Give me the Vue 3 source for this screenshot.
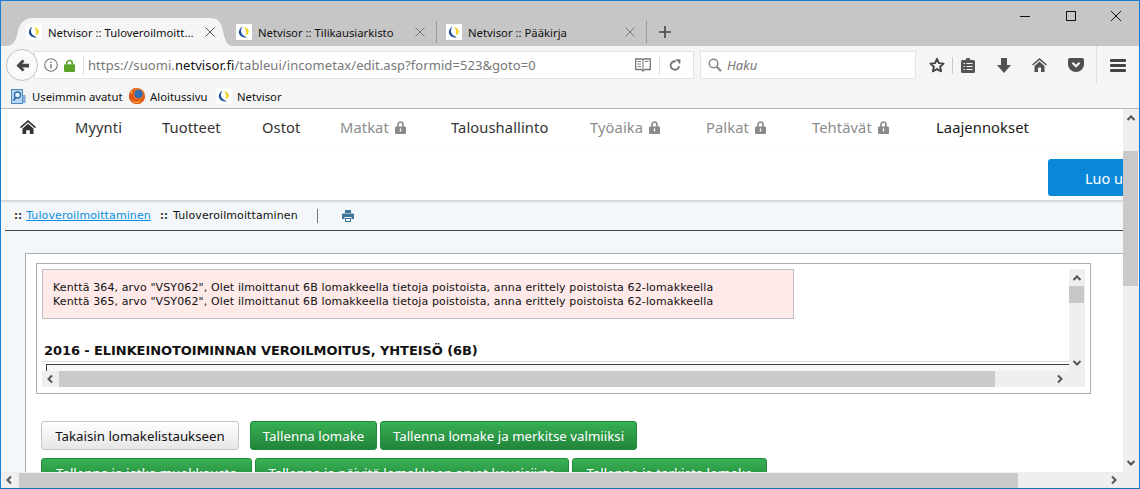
<script setup>
const nav = [
  { t: 'Myynti', w: 87 },
  { t: 'Tuotteet', w: 100 },
  { t: 'Ostot', w: 78 },
  { t: 'Matkat', w: 111, lock: true },
  { t: 'Taloushallinto', w: 139 },
  { t: 'Työaika', w: 116, lock: true },
  { t: 'Palkat', w: 106, lock: true },
  { t: 'Tehtävät', w: 124, lock: true },
  { t: 'Laajennokset', w: 110, dark: true },
]
const tabs = [
  { t: 'Netvisor :: Tuloveroilmoitt...', active: true },
  { t: 'Netvisor :: Tilikausiarkisto' },
  { t: 'Netvisor :: Pääkirja' },
]
const favBlue = 'M6.5 2.500C3.500 4.500 2 7.500 3.500 10.500 5 13 8 14 11 13.200 8.500 12.500 6 11 5.200 8.500 4.600 6.500 5.200 4.300 6.500 2.500z'
const favYellow = 'M8 3c2.800.6 5 2.500 4.800 5-.2 1.500-1.800 3-3.800 3.500 1-1.300 1.500-2.700 1.200-4.200C9.900 5.800 9 4.200 8 3z'
</script>

<template>
  <div class="win">
    <div class="tabbar">
      <div v-for="tab in tabs" :key="tab.t" class="tab" :class="{ active: tab.active }">
        <svg v-if="tab.active" class="tabshape" viewBox="0 0 228 28"><path d="M0 28c9 0 11-6 13-15C15 4 20 0 28 0H205c8 0 11 4 13 13 2 9 4 15 10 15z" fill="#f5f5f5"/></svg>
        <svg class="fav" viewBox="0 0 16 16"><rect width="16" height="16" fill="#fff"/><path :d="favBlue" fill="#1f4f9c"/><path :d="favYellow" fill="#f3cf1d"/></svg>
        <span class="tab-t">{{ tab.t }}</span>
        <svg class="x" viewBox="0 0 10 10"><path d="M.5.5l9 9M9.500.5l-9 9" :stroke="tab.active ? '#555' : '#777'" fill="none"/></svg>
      </div>
      <svg class="plus" viewBox="0 0 12 12"><path d="M6 0v12M0 6h12" stroke="#444" stroke-width="1.600" fill="none"/></svg>
      <div class="winbtns">
        <svg viewBox="0 0 10 10" class="wb"><path d="M0 5.500h10" stroke="#111" fill="none"/></svg>
        <svg viewBox="0 0 10 10" class="wb mx"><rect x=".5" y=".5" width="9" height="9" stroke="#111" fill="none"/></svg>
        <svg viewBox="0 0 10 10" class="wb cl"><path d="M0 0l10 10M10 0L0 10" stroke="#111" fill="none"/></svg>
      </div>
    </div>

    <div class="toolbar">
      <div class="back">
        <svg viewBox="0 0 16 16" width="15" height="15"><path d="M8 1.500L1.500 8 8 14.500l2.200-2L7.800 10H15V6H7.800l2.400-2.500z" fill="#444"/></svg>
      </div>
      <div class="urlbar">
        <svg class="ico-i" viewBox="0 0 14 14"><circle cx="7" cy="7" r="6.300" fill="none" stroke="#777" stroke-width="1.100"/><rect x="6.300" y="6" width="1.400" height="4.500" fill="#777"/><rect x="6.300" y="3.500" width="1.400" height="1.500" fill="#777"/></svg>
        <svg class="ico-l" viewBox="0 0 12 14"><path d="M3 6V4.500a3 3 0 0 1 6 0V6" fill="none" stroke="#5ba62a" stroke-width="1.800"/><rect y="5.500" width="12" height="8.500" rx="1" fill="#5ba62a"/></svg>
        <span class="sep"></span>
        <span class="url">https://suomi.<b>netvisor.fi</b>/tableui/incometax/edit.asp?formid=523&amp;goto=0</span>
        <svg class="book" viewBox="0 0 16 14"><path d="M.7 1h6.300L8 1.800 9 1h6.300v10.500H9.500L8 13 6.500 11.500H.7z" fill="#fff" stroke="#777" stroke-width="1.300"/><path d="M8 2.500v9M2.500 3.500h3.500M2.500 6h3.500M2.500 8.500h3.500M10 3.500h3.500" stroke="#777" fill="none"/></svg>
        <span class="sep2"></span>
        <svg class="reload" viewBox="0 0 14 14"><path d="M11.800 8.500A5 5 0 1 1 8 2.700" fill="none" stroke="#777" stroke-width="2.200"/><path d="M7.500 0l6 .5-.5 6z" fill="#777"/></svg>
      </div>
      <div class="search">
        <svg viewBox="0 0 14 14" width="14" height="14"><circle cx="5.500" cy="5.500" r="4.300" fill="none" stroke="#888" stroke-width="1.500"/><path d="M8.500 8.500L13 13" stroke="#888" stroke-width="2.200" fill="none"/></svg>
        <i>Haku</i>
      </div>
      <div class="tools">
        <svg class="t1" viewBox="0 0 16 16"><path d="M8 1.800l1.900 4.300 4.700.5-3.500 3.100 1 4.600L8 12 3.900 14.300l1-4.600L1.400 6.600l4.700-.5z" fill="none" stroke="#444" stroke-width="1.900" stroke-linejoin="round"/></svg>
        <span class="tsep"></span>
        <svg class="t2" viewBox="0 0 14 16"><path d="M1.500 3H4.500L5.500 1h3l1 2h3A1.500 1.500 0 0 1 14 4.500V14.500A1.500 1.500 0 0 1 12.500 16h-11A1.500 1.500 0 0 1 0 14.500V4.500A1.500 1.500 0 0 1 1.500 3z" fill="#555"/><path d="M2.500 6.500h1.500M2.500 9.500h1.500M2.500 12.500h1.500M5.500 6.500h6M5.500 9.500h6M5.500 12.500h6" stroke="#f5f5f5" fill="none" stroke-width="1.200"/></svg>
        <svg class="t3" viewBox="0 0 14 15"><path d="M4 0h6v7h4l-7 8-7-8h4z" fill="#505050"/></svg>
        <svg class="t4" viewBox="0 0 15 14"><path d="M7.500 0L0 6.500l1 1L7.500 2 14 7.500l1-1z" fill="#505050"/><path d="M2.500 8L7.500 3.500 12.500 8v6H9V9.500H6V14H2.500z" fill="#505050"/></svg>
        <svg class="t5" viewBox="0 0 16 14"><path d="M2 0h12a2 2 0 0 1 2 2v4.500a8 7.500 0 0 1-16 0V2a2 2 0 0 1 2-2z" fill="#505050"/><path d="M4.500 4.800L8 8.300 11.500 4.800" stroke="#f5f5f5" stroke-width="2.200" fill="none"/></svg>
        <span class="tsep2"></span>
        <div class="burger"><span></span><span></span><span></span></div>
      </div>
    </div>

    <div class="bookmarks">
      <svg class="bm" viewBox="0 0 15 15"><rect x=".5" y=".5" width="11" height="14" fill="#b9d4ee" stroke="#4d86bd"/><rect x="11.500" y="6" width="3" height="8" fill="#7eaedb"/><circle cx="6.500" cy="6" r="3" fill="#e7f2fb" stroke="#2c6ba8" stroke-width="1.300"/><path d="M4.500 8.500L2.500 11.500" stroke="#2c6ba8" stroke-width="1.700"/></svg>
      <span class="bt b1">Useimmin avatut</span>
      <svg class="ff" viewBox="0 0 16 16"><circle cx="8" cy="8" r="8" fill="#e8701c"/><circle cx="9.500" cy="6" r="4.200" fill="#2f6db5"/><path d="M1 4.500C2 2 4 .5 6.500 0 5.500 1.500 5.500 2.800 6.200 3.800 4.800 4.500 4 6 4.500 8c.6 2.500 3 3.800 5.500 3.500 2-.2 3.500-1.500 4-3 .3-1 .3-2.200 0-3.300.9 1 1.700 1.800 2 3-.3 4.500-3.500 7.800-8 7.800-4 0-8-3-8-7.500 0-1.300.2-2.400 1-4z" fill="#e2581a"/><path d="M2 12.500c3 3.200 8.500 3.200 11.500 0-3.300 1.500-8 1.700-11.500 0zM1.500 5C2 3.500 3 2.500 4 1.800 3.300 3 3 4.500 3 6z" fill="#f7b52f"/></svg>
      <span class="bt b2">Aloitussivu</span>
      <svg class="fav bf" viewBox="0 0 16 16"><rect width="16" height="16" fill="#fff"/><path :d="favBlue" fill="#1f4f9c"/><path :d="favYellow" fill="#f3cf1d"/></svg>
      <span class="bt b3">Netvisor</span>
    </div>

    <div class="viewport">
      <div class="page">
        <div class="topnav">
          <svg class="home" viewBox="0 0 16 14"><path d="M8 0L0 7l1 1.200 7-6 7 6L16 7z" fill="#333"/><path d="M2.500 8.500L8 3.800l5.500 4.700V14H9.800v-3.800H6.200V14H2.500z" fill="#333"/></svg>
          <div class="navitems">
            <div v-for="n in nav" :key="n.t" class="nav" :class="{ off: n.lock, dark: n.dark }" :style="{ width: n.w + 'px' }">
              <span>{{ n.t }}</span>
              <svg v-if="n.lock" class="lock" viewBox="0 0 11 13"><path d="M3 6V3.500a2.500 2.500 0 0 1 5 0V6" fill="none" stroke="#8a8a8a" stroke-width="1.700"/><rect y="5.500" width="11" height="7.500" rx="1" fill="#8a8a8a"/><rect x="4.800" y="7.500" width="1.400" height="3" fill="#fff"/></svg>
            </div>
          </div>
        </div>
        <div class="ctaline"><div class="cta">Luo u</div></div>
        <div class="crumbs">
          <span class="cc">::</span>
          <a class="link">Tuloveroilmoittaminen</a>
          <span class="cc c2">::</span>
          <span class="cur">Tuloveroilmoittaminen</span>
          <span class="vs"></span>
          <svg class="print" viewBox="0 0 12 12"><path d="M3 0h6v3H3z" fill="#3e769c"/><path d="M1 3.500h10a1 1 0 0 1 1 1V9H9.500V7h-7v2H0V4.500a1 1 0 0 1 1-1z" fill="#3e769c"/><path d="M3 8h6v4H3z" fill="#3e769c"/><path d="M4 9h4v2H4z" fill="#f4f7fa"/></svg>
        </div>
        <div class="rule"></div>
        <div class="main">
          <div class="panel">
            <div class="inner">
              <div class="inner-view">
                <div class="alert">
                  <div>Kenttä 364, arvo "VSY062", Olet ilmoittanut 6B lomakkeella tietoja poistoista, anna erittely poistoista 62-lomakkeella</div>
                  <div>Kenttä 365, arvo "VSY062", Olet ilmoittanut 6B lomakkeella tietoja poistoista, anna erittely poistoista 62-lomakkeella</div>
                </div>
                <div class="h">2016 - ELINKEINOTOIMINNAN VEROILMOITUS, YHTEISÖ (6B)</div>
                <div class="frame"><div class="frame-in"></div></div>
              </div>
              <div class="h-bar">
                <svg class="arrh" viewBox="0 0 8 10"><path d="M6 1.500L2.500 5 6 8.500" stroke="#555" stroke-width="2" fill="none"/></svg>
                <div class="h-thumb"></div>
                <svg class="arrh r" viewBox="0 0 8 10"><path d="M2 1.500L5.500 5 2 8.500" stroke="#555" stroke-width="2" fill="none"/></svg>
              </div>
              <div class="v-bar">
                <svg class="arr" viewBox="0 0 10 8"><path d="M1.500 6L5 2.500 8.500 6" stroke="#555" stroke-width="2" fill="none"/></svg>
                <div class="v-thumb"></div>
                <svg class="arr dn" viewBox="0 0 10 8"><path d="M1.500 2L5 5.500 8.500 2" stroke="#555" stroke-width="2" fill="none"/></svg>
              </div>
            </div>
            <div class="btnrow first">
              <button class="btn grey">Takaisin lomakelistaukseen</button>
              <button class="btn green g1">Tallenna lomake</button>
              <button class="btn green g2">Tallenna lomake ja merkitse valmiiksi</button>
            </div>
            <div class="btnrow second">
              <button class="btn green g3">Tallenna ja jatka muokkausta</button>
              <button class="btn green g4">Tallenna ja päivitä lomakkeen arvot kausisiirto</button>
              <button class="btn green g5">Tallenna ja tarkista lomake</button>
            </div>
          </div>
        </div>
      </div>
      <div class="sb-v">
        <svg class="arr" viewBox="0 0 10 8"><path d="M1.500 6L5 2.500 8.500 6" stroke="#555" stroke-width="2" fill="none"/></svg>
        <div class="sb-thumb"></div>
        <svg class="arr dn" viewBox="0 0 10 8"><path d="M1.500 2L5 5.500 8.500 2" stroke="#555" stroke-width="2" fill="none"/></svg>
      </div>
    </div>
    <div class="sb-h">
      <svg class="arrh" viewBox="0 0 8 10"><path d="M6 1.500L2.500 5 6 8.500" stroke="#555" stroke-width="2" fill="none"/></svg>
      <div class="sbh-thumb"></div>
      <svg class="arrh r" viewBox="0 0 8 10"><path d="M2 1.500L5.500 5 2 8.500" stroke="#555" stroke-width="2" fill="none"/></svg>
    </div>
  </div>
</template>

<style>
html, body { margin: 0; padding: 0; overflow: hidden; background: #fff; }
</style>

<style scoped>
.win {
  width: 1140px; height: 489px; box-sizing: border-box; overflow: hidden;
  border: 1px solid #1a7fd4; border-bottom-color: #1a6fb4;
  display: flex; flex-direction: column;
  font-family: "Noto Sans", "Open Sans", sans-serif; color: #222;
}
.tabbar { height: 45px; background: #c6c6c6; display: flex; align-items: flex-end; flex: none; padding-left: 25px; box-sizing: border-box; isolation: isolate; }
.tab { width: 210px; height: 28px; display: flex; align-items: center; font: 11.3px "Noto Sans", sans-serif; box-sizing: border-box; color: #111; position: relative; flex: none; }
.tabshape { position: absolute; left: -21px; top: 0; width: 228px; height: 28px; z-index: -1; }
.fav { width: 16px; height: 16px; flex: none; }
.tab-t { margin-left: 6px; white-space: nowrap; flex: 1; }
.x { width: 10px; height: 10px; flex: none; margin-right: 21px; }
.tab:not(.active)::after { content: ""; position: absolute; left: 200px; top: 3px; width: 1px; height: 22px; background: #9a9a9a; }
.plus { width: 12px; height: 12px; margin: 0 0 8px 3px; flex: none; }
.winbtns { align-self: flex-start; margin: 10px 0 0 auto; padding-right: 18px; display: flex; }
.wb { width: 10px; height: 10px; flex: none; }
.mx { margin-left: 36px; }
.cl { margin-left: 35px; }

.toolbar { height: 38px; background: #f5f5f5; display: flex; align-items: center; flex: none; }
.back { width: 32px; height: 32px; box-sizing: border-box; border: 1px solid #c4c4c4; border-radius: 50%; background: #fafafa; display: flex; align-items: center; justify-content: center; margin-left: 5px; flex: none; position: relative; z-index: 1; }
.urlbar { width: 660px; height: 28px; background: #fff; border: 1px solid #e3e3e3; box-sizing: border-box; margin-left: -4px; display: flex; align-items: center; padding-left: 9px; flex: none; }
.ico-i { width: 14px; height: 14px; flex: none; }
.ico-l { width: 11px; height: 13px; margin-left: 6px; flex: none; }
.sep { width: 1px; height: 19px; background: #ddd; margin: 0 4px 0 8px; flex: none; }
.url { font: 13px "Noto Sans", sans-serif; color: #777; white-space: nowrap; flex: 1; letter-spacing: .07px; }
.url b { color: #111; font-weight: 400; }
.book { width: 16px; height: 14px; flex: none; }
.sep2 { width: 1px; height: 19px; background: #ddd; margin: 0 9px 0 8px; flex: none; }
.reload { width: 12px; height: 12px; margin-right: 12px; flex: none; }
.search { width: 216px; height: 28px; margin-left: 6px; box-sizing: border-box; background: #fff; border: 1px solid #e3e3e3; display: flex; align-items: center; gap: 5px; padding-left: 7px; font-size: 13px; color: #777; flex: none; }
.tools { display: flex; align-items: center; flex: 1; height: 100%; }
.tools svg, .tools .burger { flex: none; }
.t1 { margin-left: 13px; width: 16px; height: 16px; }
.tsep { margin-left: 7px; width: 1px; height: 17px; background: #c9c9c9; flex: none; }
.t2 { margin-left: 8px; width: 14px; height: 16px; }
.t3 { margin-left: 22px; width: 14px; height: 15px; }
.t4 { margin-left: 21px; width: 15px; height: 14px; }
.t5 { margin-left: 21px; width: 16px; height: 14px; }
.tsep2 { margin-left: 12px; width: 1px; height: 38px; background: #e0e0e0; flex: none; }
.burger { margin-left: 13px; width: 16px; display: flex; flex-direction: column; gap: 2px; }
.burger span { display: block; height: 3px; background: #444; border-radius: 1px; }

.bookmarks { height: 25px; background: #f5f5f5; border-bottom: 1px solid #b9b9b9; display: flex; align-items: center; flex: none; font-size: 11.3px; color: #111; box-sizing: border-box; }
.bm { width: 15px; height: 15px; flex: none; margin-left: 10px; }
.ff { width: 16px; height: 16px; flex: none; }
.bt { white-space: nowrap; flex: none; }
.b1 { margin-left: 6px; width: 97px; }
.b2 { margin-left: 5px; width: 66px; }
.b3 { margin-left: 5px; }

.viewport { height: 363px; display: flex; flex: none; overflow: hidden; }
.page { width: 1122px; height: 363px; overflow: hidden; flex: none; background: #fff; }
.topnav { height: 36px; display: flex; align-items: center; box-sizing: border-box; padding-left: 19px; }
.home { width: 16px; height: 14px; flex: none; }
.navitems { display: flex; margin-left: 39px; }
.nav { font-size: 14.7px; color: #333; display: flex; align-items: center; gap: 6px; white-space: nowrap; flex: none; height: 20px; letter-spacing: .1px; }
.nav.off { color: #8c8c8c; }
.nav.dark { color: #1a1a1a; }
.lock { width: 11px; height: 13px; flex: none; }
.ctaline { height: 56px; display: flex; justify-content: flex-end; box-sizing: border-box; border-bottom: 1px solid #d4d4d4; box-shadow: 0 1px 2px rgba(0,0,0,.12); position: relative; z-index: 1; background: #fff; }
.cta { width: 75px; height: 37px; margin-top: 14px; background: #0a87d8; border-radius: 3px 0 0 3px; color: #fff; font-size: 14.5px; display: flex; align-items: center; padding-left: 37px; box-sizing: border-box; white-space: nowrap; overflow: hidden; }
.crumbs { height: 29px; background: #f3f7fa; display: flex; align-items: center; font: 11px "DejaVu Sans", "Liberation Sans", sans-serif; letter-spacing: .1px; padding-left: 13px; color: #111; box-sizing: border-box; }
.cc { font-weight: 700; color: #333; font-size: 10px; }
.link { margin-left: 4px; color: #0a8ee0; text-decoration: underline; }
.c2 { margin-left: 9px; }
.cur { margin-left: 5px; }
.vs { width: 1px; height: 14px; background: #777; margin-left: 19px; flex: none; }
.print { width: 12px; height: 12px; margin-left: 24px; flex: none; }
.rule { height: 1px; background: #444; margin-left: 4px; }
.main { background: #f3f7fa; height: 400px; padding: 22px 0 0 24px; box-sizing: border-box; }
.panel { width: 1098px; height: 300px; background: #fff; border: 1px solid #adadad; border-right: none; box-sizing: border-box; padding: 9px 0 0 10px; }
.inner { width: 1055px; height: 131px; border: 1px solid #adadad; box-sizing: border-box; position: relative; background: #fff; }
.inner-view { margin: 5px 0 0 5px; width: 1027px; height: 103px; overflow: hidden; }
.alert { width: 752px; height: 50px; box-sizing: border-box; border: 1px solid #bdbdbd; background: #ffe9e9; font: 11px/14px "DejaVu Sans", sans-serif; letter-spacing: .125px; color: #111; padding: 11px 0 0 10px; white-space: nowrap; }
.h { font: 700 13px/16px "DejaVu Sans", sans-serif; margin: 24px 0 0 2px; color: #111; white-space: nowrap; letter-spacing: -.08px; }
.frame { margin-top: 2px; border-top: 1px solid #ddd; padding-top: 2px; }
.frame-in { border: 1px solid #444; border-right: none; border-bottom: none; height: 30px; margin-left: 4px; background: #f8f8f8; }
.v-bar { position: absolute; left: 1032px; top: 5px; width: 16px; height: 118px; background: #efefef; display: flex; flex-direction: column; align-items: flex-start; }
.v-thumb { width: 15px; height: 17px; background: #c8c8c8; margin-top: 4px; }
.arr { width: 10px; height: 8px; margin: 5px 0 0 3px; flex: none; }
.v-bar .arr.dn { margin-top: auto; margin-bottom: 20px; }
.h-bar { position: absolute; left: 5px; bottom: 6px; width: 1043px; height: 16px; background: #efefef; display: flex; align-items: center; }
.arrh { width: 8px; height: 10px; flex: none; margin-left: 4px; }
.h-thumb { width: 936px; height: 16px; background: #cacaca; margin-left: 5px; }
.h-bar .arrh.r { margin-left: auto; margin-right: 21px; }
.btnrow { display: flex; padding-left: 5px; }
.first { margin-top: 27px; }
.second { margin-top: 8px; gap: 3px; }
.btn { font: 13.3px "Noto Sans", sans-serif; height: 29px; box-sizing: border-box; border-radius: 3px; padding: 0; white-space: nowrap; flex: none; text-align: center; }
.grey { width: 198px; color: #111; background: linear-gradient(#fff, #e6e6e6); border: 1px solid #c5c5c5; }
.green { color: #fff; background: linear-gradient(#38b054, #21843a); border: 1px solid #1f8a3d; }
.g1 { width: 127px; margin-left: 11px; }
.g2 { width: 257px; margin-left: 3px; }
.g3 { width: 211px; }
.g4 { width: 314px; }
.g5 { width: 195px; }
.sb-v { width: 16px; height: 363px; background: #efefef; display: flex; flex-direction: column; align-items: flex-start; flex: none; }
.sb-thumb { width: 15px; height: 135px; background: #c9c9c9; margin-top: 29px; }
.sb-v .arr.dn { margin-top: auto; margin-bottom: 5px; }
.sb-h { height: 16px; background: #efefef; display: flex; align-items: center; flex: none; }
.sbh-thumb { width: 999px; height: 15px; background: #cacaca; margin-left: 6px; }
.sb-h .arrh.r { margin-left: auto; margin-right: 21px; }
</style>
